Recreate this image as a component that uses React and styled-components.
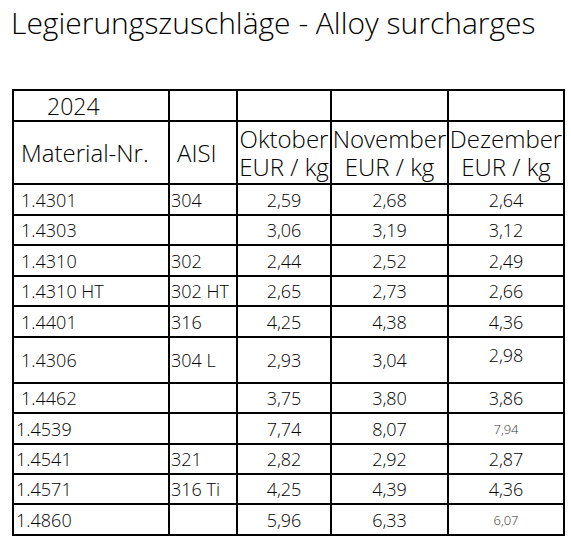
import React from "react";
import styled, { createGlobalStyle } from "styled-components";

const Global = createGlobalStyle`
  html, body { margin: 0; padding: 0; background: #fff; }
  body { font-family: "Open Sans", "Liberation Sans", sans-serif; color: #111; }
`;

const Page = styled.div`
  padding: 3px 0 0 11px;
  width: 571px;
  box-sizing: border-box;
`;

const Title = styled.h1`
  margin: 0 0 46px 0;
  font-size: 30px;
  line-height: 40px;
  font-weight: 300;
  color: #000;
`;

const Table = styled.table`
  border-collapse: collapse;
  table-layout: fixed;
  width: 551px;
  margin-left: 1px;
  font-weight: 300;
  color: #000;
`;

const Row = styled.tr`
  height: ${(p) => p.$h}px;
`;

const Cell = styled.td`
  border: 2px solid #000;
  padding: ${(p) => (p.$valign === "top" ? 6 : 0)}px 0 0 ${(p) => p.$pad ?? 0}px;
  text-align: ${(p) => p.$align || "left"};
  vertical-align: ${(p) => p.$valign || "middle"};
  font-size: ${(p) => (p.$small ? 13 : 18)}px;
  line-height: 22px;
  color: ${(p) => (p.$small ? "#333" : "#000")};
  white-space: nowrap;
  overflow: visible;
`;

const HeadCell = styled.td`
  border: 2px solid #000;
  padding: 0 0 0 ${(p) => p.$pad ?? 0}px;
  text-align: ${(p) => p.$align || "left"};
  vertical-align: middle;
  font-size: ${(p) => p.$size || 24}px;
  line-height: 28px;
  white-space: nowrap;
  overflow: visible;
`;

const rows = [
  { m: "1.4301", a: "304", v: ["2,59", "2,68", "2,64"], h: 31 },
  { m: "1.4303", a: "", v: ["3,06", "3,19", "3,12"], h: 30 },
  { m: "1.4310", a: "302", v: ["2,44", "2,52", "2,49"], h: 31 },
  { m: "1.4310 HT", a: "302 HT", v: ["2,65", "2,73", "2,66"], h: 30 },
  { m: "1.4401", a: "316", v: ["4,25", "4,38", "4,36"], h: 31 },
  { m: "1.4306", a: "304 L", v: ["2,93", "3,04", "2,98"], h: 46, topLast: true },
  { m: "1.4462", a: "", v: ["3,75", "3,80", "3,86"], h: 30 },
  { m: "1.4539", a: "", v: ["7,74", "8,07", "7,94"], h: 31, tight: true, smallLast: true },
  { m: "1.4541", a: "321", v: ["2,82", "2,92", "2,87"], h: 30, tight: true },
  { m: "1.4571", a: "316 Ti", v: ["4,25", "4,39", "4,36"], h: 30, tight: true },
  { m: "1.4860", a: "", v: ["5,96", "6,33", "6,07"], h: 31, tight: true, smallLast: true },
];

export default function App() {
  return (
    <>
      <Global />
      <Page>
        <Title>Legierungszuschläge - Alloy surcharges</Title>
        <Table>
          <colgroup>
            <col style={{ width: 156 }} />
            <col style={{ width: 68 }} />
            <col style={{ width: 94 }} />
            <col style={{ width: 117 }} />
            <col style={{ width: 116 }} />
          </colgroup>
          <tbody>
            <Row $h={31}>
              <HeadCell $pad={33} $size={23}>2024</HeadCell>
              <HeadCell />
              <HeadCell />
              <HeadCell />
              <HeadCell />
            </Row>
            <Row $h={63}>
              <HeadCell $pad={7}>Material-Nr.</HeadCell>
              <HeadCell $pad={7}>AISI</HeadCell>
              <HeadCell $align="center">
                Oktober
                <br />
                EUR / kg
              </HeadCell>
              <HeadCell $align="center">
                November
                <br />
                EUR / kg
              </HeadCell>
              <HeadCell $align="center">
                Dezember
                <br />
                EUR / kg
              </HeadCell>
            </Row>
            {rows.map((r) => (
              <Row key={r.m} $h={r.h}>
                <Cell $pad={r.tight ? 2 : 7}>{r.m}</Cell>
                <Cell $pad={1}>{r.a}</Cell>
                <Cell $align="center">{r.v[0]}</Cell>
                <Cell $align="center">{r.v[1]}</Cell>
                <Cell
                  $align="center"
                  $valign={r.topLast ? "top" : "middle"}
                  $small={r.smallLast}
                >
                  {r.v[2]}
                </Cell>
              </Row>
            ))}
          </tbody>
        </Table>
      </Page>
    </>
  );
}
